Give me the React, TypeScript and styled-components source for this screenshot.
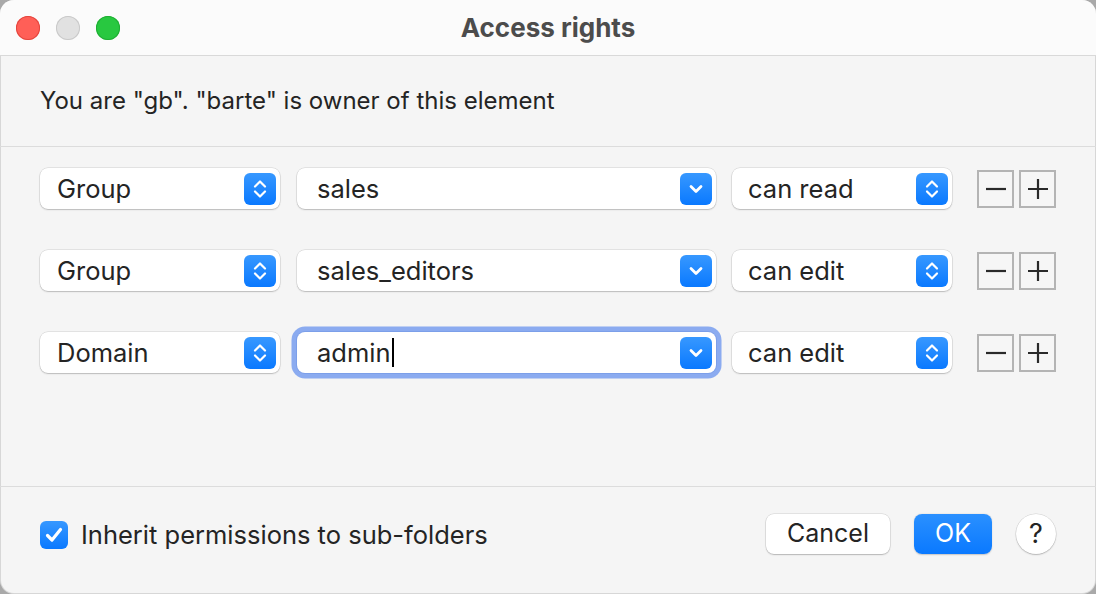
import React from "react";
import styled, { createGlobalStyle, css } from "styled-components";

const GlobalStyle = createGlobalStyle`
  html, body { margin: 0; padding: 0; background: #a9a9a9; }
  body { font-family: "Inter", "Noto Sans", "Liberation Sans", sans-serif; -webkit-font-smoothing: antialiased; }
  * { box-sizing: border-box; }
`;

const Window = styled.div`
  width: 1096px;
  height: 594px;
  background: #f5f5f5;
  border-radius: 14px;
  overflow: hidden;
  display: flex;
  flex-direction: column;
  box-shadow: inset 0 0 0 1px rgba(0, 0, 0, 0.12);
  color: #242424;
`;

const TitleBar = styled.div`
  height: 56px;
  flex: none;
  background: #fbfbfb;
  border-bottom: 1px solid #d9d9d9;
  display: flex;
  align-items: center;
  padding-left: 16px;
  position: relative;
`;

const Lights = styled.div`
  display: flex;
  gap: 16px;
`;

const Light = styled.span<{ $c: string; $b: string }>`
  width: 24px;
  height: 24px;
  border-radius: 50%;
  background: ${(p) => p.$c};
  box-shadow: inset 0 0 0 1px ${(p) => p.$b};
`;

const Title = styled.div`
  position: absolute;
  left: 0;
  right: 0;
  top: 0;
  bottom: 0;
  display: flex;
  align-items: center;
  justify-content: center;
  font-size: 26px;
  font-weight: 700;
  color: #4c4c4c;
  pointer-events: none;
  padding-bottom: 1px;
`;

const Info = styled.div`
  height: 91px;
  flex: none;
  display: flex;
  align-items: center;
  padding-left: 40px;
  border-bottom: 1px solid #dcdcdc;
  font-size: 24px;
  padding-bottom: 1px;
`;

const Rows = styled.div`
  flex: 1;
  display: flex;
  flex-direction: column;
  gap: 41px;
  padding: 21px 40px 0 40px;
  border-bottom: 1px solid #dcdcdc;
`;

const Row = styled.div`
  display: flex;
  align-items: center;
  height: 41px;
`;

const controlBase = css`
  height: 41px;
  background: #ffffff;
  border-radius: 8px;
  box-shadow: 0 0 0 0.5px rgba(0, 0, 0, 0.14), 0 1px 1.5px rgba(0, 0, 0, 0.18);
  display: flex;
  align-items: center;
  font-size: 25.5px;
  color: #242424;
  flex: none;
`;

const Popup = styled.div<{ $w: number; $pl: number }>`
  ${controlBase};
  width: ${(p) => p.$w}px;
  padding-left: ${(p) => p.$pl}px;
  padding-right: 4px;
`;

const Combo = styled.div<{ $focused?: boolean }>`
  ${controlBase};
  width: 419px;
  margin: 0 16px 0 17px;
  padding-left: 20px;
  padding-right: 4px;
  ${(p) =>
    p.$focused &&
    css`
      box-shadow: 0 0 0 1px #7c9fe9, 0 0 0 5.5px rgba(120, 158, 238, 0.85);
    `}
`;

const Label = styled.span`
  flex: 1;
  white-space: nowrap;
  display: flex;
  align-items: center;
  padding-bottom: 1px;
`;

const Caret = styled.span`
  display: inline-block;
  width: 2px;
  height: 29px;
  background: #000;
  margin-left: 1px;
`;

const Arrow = styled.span`
  width: 32px;
  height: 32px;
  border-radius: 6px;
  background: linear-gradient(#3798ff, #0a79ff);
  display: flex;
  align-items: center;
  justify-content: center;
  flex: none;
`;

const StepGroup = styled.div`
  display: flex;
  gap: 5px;
  margin-left: 25px;
`;

const Step = styled.button`
  width: 37px;
  height: 38px;
  border: 2px solid #b4b4b4;
  background: #f6f6f6;
  padding: 0;
  display: flex;
  align-items: center;
  justify-content: center;
`;

const Footer = styled.div`
  height: 107px;
  flex: none;
  display: flex;
  align-items: flex-start;
  padding: 27px 40px 0 40px;
`;

const Check = styled.label`
  display: flex;
  align-items: center;
  gap: 13px;
  font-size: 25.5px;
  height: 40px;
  flex: 1;
`;

const CheckBox = styled.span`
  width: 28px;
  height: 28px;
  border-radius: 6px;
  background: linear-gradient(#3798ff, #0a79ff);
  display: flex;
  align-items: center;
  justify-content: center;
  margin-top: 2px;
`;

const Button = styled.button<{ $primary?: boolean; $w: number }>`
  height: 40px;
  width: ${(p) => p.$w}px;
  border: none;
  border-radius: 8px;
  font-family: inherit;
  font-size: 25px;
  padding: 0 0 2px 0;
  margin-right: 24px;
  ${(p) =>
    p.$primary
      ? css`
          background: linear-gradient(#2a90ff, #0a79ff);
          color: #fff;
          box-shadow: 0 0.5px 1.5px rgba(0, 0, 0, 0.2);
        `
      : css`
          background: #fff;
          color: #242424;
          box-shadow: 0 0 0 0.5px rgba(0, 0, 0, 0.14), 0 1px 1.5px rgba(0, 0, 0, 0.2);
        `}
`;

const Help = styled.button`
  width: 40px;
  height: 40px;
  border-radius: 50%;
  border: none;
  background: #fff;
  box-shadow: 0 0 0 0.5px rgba(0, 0, 0, 0.14), 0 1px 1.5px rgba(0, 0, 0, 0.2);
  font-family: inherit;
  font-size: 27px;
  font-weight: 400;
  color: #242424;
  padding: 0 0 2px 0;
`;

const UpDown = () => (
  <svg width="32" height="32" viewBox="0 0 32 32" fill="none">
    <path d="M11 13.5 L16 8.5 L21 13.5" stroke="#fff" strokeWidth="2.2" strokeLinecap="round" strokeLinejoin="round" />
    <path d="M11 18.5 L16 23.5 L21 18.5" stroke="#fff" strokeWidth="2.2" strokeLinecap="round" strokeLinejoin="round" />
  </svg>
);

const Down = () => (
  <svg width="32" height="32" viewBox="0 0 32 32" fill="none">
    <path d="M11 13.5 L16 18.5 L21 13.5" stroke="#fff" strokeWidth="2.8" strokeLinecap="round" strokeLinejoin="round" />
  </svg>
);

const Minus = () => (
  <svg width="24" height="24" viewBox="0 0 24 24">
    <path d="M2 12 H22" stroke="#2a2a2a" strokeWidth="2.2" />
  </svg>
);

const Plus = () => (
  <svg width="24" height="24" viewBox="0 0 24 24">
    <path d="M2 12 H22 M12 2 V22" stroke="#2a2a2a" strokeWidth="2.2" />
  </svg>
);

type RowData = { kind: string; name: string; right: string; focused?: boolean };

const rows: RowData[] = [
  { kind: "Group", name: "sales", right: "can read" },
  { kind: "Group", name: "sales_editors", right: "can edit" },
  { kind: "Domain", name: "admin", right: "can edit", focused: true },
];

export default function App() {
  return (
    <>
      <GlobalStyle />
      <Window>
        <TitleBar>
          <Lights>
            <Light $c="#ff5f57" $b="#e3463e" />
            <Light $c="#e1e1e1" $b="#c9c9c9" />
            <Light $c="#28c840" $b="#1fae33" />
          </Lights>
          <Title>Access rights</Title>
        </TitleBar>
        <Info>You are "gb". "barte" is owner of this element</Info>
        <Rows>
          {rows.map((r, i) => (
            <Row key={i}>
              <Popup $w={240} $pl={17}>
                <Label>{r.kind}</Label>
                <Arrow>
                  <UpDown />
                </Arrow>
              </Popup>
              <Combo $focused={r.focused}>
                <Label>
                  {r.name}
                  {r.focused && <Caret />}
                </Label>
                <Arrow>
                  <Down />
                </Arrow>
              </Combo>
              <Popup $w={220} $pl={16}>
                <Label>{r.right}</Label>
                <Arrow>
                  <UpDown />
                </Arrow>
              </Popup>
              <StepGroup>
                <Step>
                  <Minus />
                </Step>
                <Step>
                  <Plus />
                </Step>
              </StepGroup>
            </Row>
          ))}
        </Rows>
        <Footer>
          <Check>
            <CheckBox>
              <svg width="28" height="28" viewBox="0 0 28 28" fill="none">
                <path d="M7.5 14.5 L12 19 L20.5 8.5" stroke="#fff" strokeWidth="3.2" strokeLinecap="round" strokeLinejoin="round" />
              </svg>
            </CheckBox>
            Inherit permissions to sub-folders
          </Check>
          <Button $w={124}>Cancel</Button>
          <Button $w={78} $primary>
            OK
          </Button>
          <Help>?</Help>
        </Footer>
      </Window>
    </>
  );
}
